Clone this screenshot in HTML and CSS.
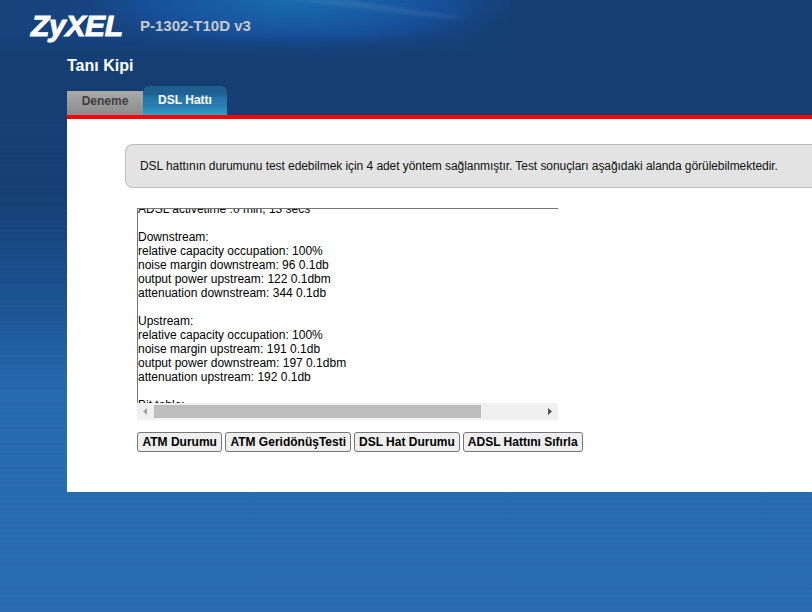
FILE: index.html
```html
<!DOCTYPE html>
<html lang="tr">
<head>
<meta charset="utf-8">
<title>Tanı Kipi</title>
<link rel="stylesheet" href="styles.css">
</head>
<body>
<div class="page">
  <header class="header">
    <div class="glow">
      <svg class="streak" width="510" height="58" viewBox="0 0 510 58"><polygon points="290,0 350,0 470,18 440,18"/></svg>
    </div>
    <div class="brand">
      <span class="logo">ZyXEL</span>
      <span class="model">P-1302-T10D v3</span>
    </div>
    <h1 class="title">Tanı Kipi</h1>
    <nav class="tabs">
      <a class="tab tab-off">Deneme</a>
      <a class="tab tab-on">DSL Hattı</a>
    </nav>
  </header>
  <main class="content">
    <div class="note">DSL hattının durumunu test edebilmek için 4 adet yöntem sağlanmıştır. Test sonuçları aşağıdaki alanda görülebilmektedir.</div>
    <div class="logbox">
      <div class="logview">
        <pre class="log">ADSL activetime :0 min, 13 secs

Downstream:
relative capacity occupation: 100%
noise margin downstream: 96 0.1db
output power upstream: 122 0.1dbm
attenuation downstream: 344 0.1db

Upstream:
relative capacity occupation: 100%
noise margin upstream: 191 0.1db
output power downstream: 197 0.1dbm
attenuation upstream: 192 0.1db

Bit table:</pre>
      </div>
      <div class="hbar">
        <svg class="arrow" width="5" height="7" viewBox="0 0 5 7"><path d="M4 0V7L0 3.5Z"/></svg>
        <div class="track"><div class="thumb"></div></div>
        <svg class="arrow arrow-r" width="5" height="7" viewBox="0 0 5 7"><path d="M0 0V7L4 3.5Z"/></svg>
      </div>
    </div>
    <div class="actions">
      <button class="btn btn-first">ATM Durumu</button>
      <button class="btn">ATM GeridönüşTesti</button>
      <button class="btn">DSL Hat Durumu</button>
      <button class="btn">ADSL Hattını Sıfırla</button>
    </div>
  </main>
</div>
</body>
</html>
```
FILE: styles.css
```css
* { box-sizing: border-box; }
html, body { margin: 0; padding: 0; height: 100%; overflow: hidden; }
body {
  font-family: "Liberation Sans", Arial, sans-serif;
  background:
    repeating-linear-gradient(rgba(255,255,255,.01) 0 2px, rgba(255,255,255,0) 2px 5px),
    linear-gradient(#153f74 0, #153f74 190px, #1a508f 290px, #2569ae 390px, #276bb1 612px);
}
.page { width: 812px; height: 612px; display: flex; flex-direction: column; }
.header {
  position: relative;
  height: 115px;
  padding-left: 67px;
  background: #153f74;
  flex: none;
}
.glow {
  position: absolute;
  left: 0; top: 0;
  width: 510px; height: 58px;
  background:
    radial-gradient(ellipse 225px 56px at 295px 0, #1a6cae 0%, #17509a 65%, rgba(23,72,135,.6) 85%, rgba(21,63,116,0) 100%),
    linear-gradient(90deg, #17427a 0, #17478a 60%, rgba(21,63,116,0) 100%);
  -webkit-mask-image: linear-gradient(#000 60%, transparent);
  mask-image: linear-gradient(#000 60%, transparent);
}
.streak { display: block; fill: rgba(255,255,255,.07); filter: blur(1.5px); }
.brand {
  position: absolute;
  left: 31px; top: 9px;
  display: flex;
  align-items: center;
}
.logo {
  font: italic bold 30px/34px "Liberation Sans", sans-serif;
  color: #fff;
  -webkit-text-stroke: 1px #fff;
  letter-spacing: -0.3px;
  width: 109px;
}
.model {
  font-size: 15px;
  font-weight: bold;
  color: #c6c8cc;
  line-height: 34px;
}
.title {
  position: absolute;
  left: 67px; top: 56px;
  margin: 0;
  font-size: 16px;
  line-height: 19px;
  color: #fff;
  font-weight: bold;
}
.tabs { position: absolute; left: 67px; bottom: 0; display: flex; align-items: flex-end; }
.tab {
  display: block;
  text-align: center;
  font-size: 12px;
  font-weight: bold;
}
.tab-off {
  width: 76px; height: 24px;
  line-height: 20px;
  color: #3f3f3f;
  background: linear-gradient(#a9a9a9, #8b8b8b);
}
.tab-on {
  width: 84px; height: 29px;
  line-height: 29px;
  color: #fff;
  border-radius: 6px 6px 0 0;
  background: linear-gradient(#1d5f8e 0, #1f5f92 25%, #2476ad 45%, #2a7db1 70%, #2ba2c9 100%);
}
.content {
  margin-left: 67px;
  height: 377px;
  flex: none;
  background: #fff;
  border-top: 4px solid #f00;
  padding: 25px 0 0 58px;
  position: relative;
}
.content::before {
  content: "";
  position: absolute;
  left: -67px; top: -4px;
  width: 67px; height: 4px;
  background: #153f74;
}
.note {
  width: 687px;
  height: 44px;
  background: #e3e3e3;
  border: 1px solid #bdbdbd;
  border-right: 0;
  border-radius: 8px 0 0 8px;
  padding-left: 14px;
  font-size: 12px;
  letter-spacing: -0.06px;
  line-height: 42px;
  color: #111;
  white-space: nowrap;
}
.logbox { width: 421px; margin: 20px 0 0 12px; }
.logview {
  height: 195px;
  overflow: hidden;
  border-top: 1px solid #767676;
  border-left: 1px solid #767676;
}
.log {
  margin: -7.4px 0 0 0;
  font-family: "Liberation Sans", Arial, sans-serif;
  font-size: 12px;
  line-height: 14.05px;
  color: #000;
}
.hbar {
  height: 17px;
  background: #f0f0f0;
  display: flex;
  align-items: center;
}
.arrow { fill: #a3a3a3; margin: 0 6px 0 6px; flex: none; }
.arrow-r { fill: #505050; margin: 0 5px 0 auto; }
.track { width: 354px; height: 13px; }
.thumb { width: 327px; height: 13px; background: #bdbdbd; }
.actions { display: flex; gap: 3px; margin: 12px 0 0 12px; }
.btn {
  height: 20px;
  padding: 0 4px;
  font: bold 12px "Liberation Sans", Arial, sans-serif;
  color: #000;
  background: #efefef;
  border: 1px solid #767676;
  border-radius: 3px;
  white-space: nowrap;
}
.btn-first { padding: 0 4.5px; }
```
